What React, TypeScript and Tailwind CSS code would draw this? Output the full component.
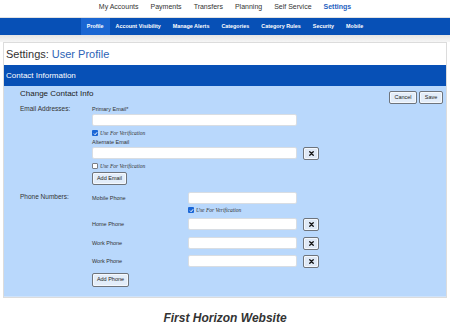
import type { ReactNode } from "react";

const topNav = ["My Accounts", "Payments", "Transfers", "Planning", "Self Service"];
const subNav = ["Profile", "Account Visibility", "Manage Alerts", "Categories", "Category Rules", "Security", "Mobile"];

function SmallButton({ children, className = "" }: { children: ReactNode; className?: string }) {
  return (
    <button className={`flex h-[13px] items-center justify-center whitespace-nowrap rounded-[2px] border border-[#6e747c] bg-[#e3edf9] px-[2px] text-[5.5px] leading-none text-[#222] shadow-[inset_0_0_0_1px_#f4f8fd] ${className}`}>
      {children}
    </button>
  );
}

function RemoveButton() {
  return (
    <button className="flex h-[13px] w-[16px] items-center justify-center rounded-[2px] border border-[#6e747c] bg-[#dfe9f6] shadow-[inset_0_0_0_1px_#f4f8fd]">
      <svg width="5" height="5" viewBox="0 0 10 10">
        <path d="M1.5 1.5 L8.5 8.5 M8.5 1.5 L1.5 8.5" stroke="#111" strokeWidth="2.6" strokeLinecap="round" />
      </svg>
    </button>
  );
}

function Verify({ checked }: { checked: boolean }) {
  return (
    <div className="flex h-[10px] items-center gap-[2px]">
      {checked ? (
        <span className="flex h-[6px] w-[6px] items-center justify-center rounded-[1px] bg-[#1a66d6]">
          <svg width="5" height="5" viewBox="0 0 10 10">
            <path d="M2 5.2 L4.2 7.4 L8.2 2.6" fill="none" stroke="#fff" strokeWidth="2" />
          </svg>
        </span>
      ) : (
        <span className="h-[6px] w-[6px] rounded-[1px] border border-[#7a7f86] bg-white" />
      )}
      <span className="whitespace-nowrap font-['Liberation_Serif',serif] text-[5.5px] italic text-[#333]">Use For Verification</span>
    </div>
  );
}

function TextInput({ className = "" }: { className?: string }) {
  return <div className={`h-[12px] rounded-[2px] border border-[#d8dde3] bg-white ${className}`} />;
}

function PhoneRow({ label, removable }: { label: string; removable: boolean }) {
  return (
    <div className="flex h-[13px] items-start">
      <div className="flex h-[12px] w-[96px] items-center text-[5.5px] text-[#333]">{label}</div>
      <TextInput className="w-[109px]" />
      {removable && (
        <div className="ml-[6px]">
          <RemoveButton />
        </div>
      )}
    </div>
  );
}

export default function App() {
  return (
    <div className="h-[336px] w-[450px] overflow-hidden bg-white font-['Liberation_Sans',Arial,sans-serif] text-[#333]">
      <nav className="flex h-[18px] items-center justify-center gap-[12px] border-b border-[#e2e2e2] pb-[3px] text-[7px]">
        {topNav.map((item) => (
          <span key={item} className="text-[#333]">{item}</span>
        ))}
        <span className="font-bold text-[#1f5fbf]">Settings</span>
      </nav>

      <div className="flex h-[17px] justify-center bg-[#0750b6]">
        {subNav.map((item, i) => (
          <span
            key={item}
            className={`flex items-center px-[6px] text-[5.4px] font-bold text-white ${i === 0 ? "bg-[#1a66d2]" : ""}`}
          >
            {item}
          </span>
        ))}
      </div>

      <div className="h-[7px] bg-gradient-to-b from-[#e4e4e4] to-[#f6f6f6]" />

      <section className="mx-[3px] border border-[#dcdcdc] bg-white">
        <h1 className="flex h-[22px] items-center px-[2px] text-[11px]">
          <span className="text-[#333]">Settings:</span>
          <span className="ml-[3px] text-[#2d63b6]">User Profile</span>
        </h1>

        <div className="flex h-[21px] items-center bg-[#0750b6] px-[2px] text-[8px] text-white">Contact Information</div>

        <div className="border-b border-[#cfe3fb] bg-[#b9d8fc] pb-[9px] pl-[16px] pr-[3px] pt-[4px]">
          <div className="flex items-start justify-between">
            <h2 className="h-[8px] text-[8px] leading-[8px] text-[#222]">Change Contact Info</h2>
            <div className="mt-[1px] flex gap-[2px]">
              <SmallButton className="w-[28px]">Cancel</SmallButton>
              <SmallButton className="w-[24px]">Save</SmallButton>
            </div>
          </div>

          <div className="mt-[1px] flex">
            <div className="w-[72px] text-[6.5px] leading-[8px]">Email Addresses:</div>
            <div className="flex flex-col">
              <div className="h-[8px] text-[5.5px] leading-[8px] text-[#333]">Primary Email*</div>
              <TextInput className="mt-[1px] w-[205px]" />
              <div className="mt-[2px]">
                <Verify checked />
              </div>
              <div className="h-[8px] text-[5.5px] leading-[8px]">Alternate Email</div>
              <div className="mt-[1px] flex h-[13px] items-start gap-[6px]">
                <TextInput className="w-[205px]" />
                <RemoveButton />
              </div>
              <div className="mt-[1px]">
                <Verify checked={false} />
              </div>
              <div className="mt-[1px] flex">
                <SmallButton className="w-[35px]">Add Email</SmallButton>
              </div>
            </div>
          </div>

          <div className="mt-[7px] flex">
            <div className="w-[72px] pt-[1px] text-[6.5px] leading-[8px]">Phone Numbers:</div>
            <div className="flex flex-col">
              <PhoneRow label="Mobile Phone" removable={false} />
              <div className="pl-[96px]">
                <Verify checked />
              </div>
              <div className="mt-[3px]">
                <PhoneRow label="Home Phone" removable />
              </div>
              <div className="mt-[6px]">
                <PhoneRow label="Work Phone" removable />
              </div>
              <div className="mt-[5px]">
                <PhoneRow label="Work Phone" removable />
              </div>
              <div className="mt-[5px] flex">
                <SmallButton className="h-[14px] w-[37px]">Add Phone</SmallButton>
              </div>
            </div>
          </div>
        </div>
      </section>

      <p className="mt-[13px] text-center text-[12px] font-bold italic leading-[14px] text-[#333]">First Horizon Website</p>
    </div>
  );
}
